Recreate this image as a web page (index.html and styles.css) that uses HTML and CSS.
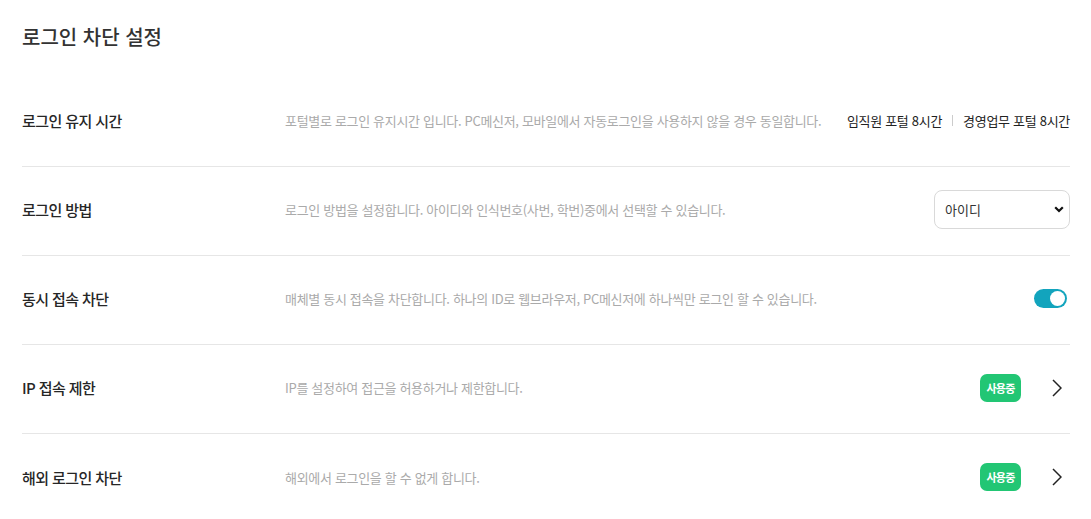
FILE: index.html
```html
<!doctype html>
<html lang="ko">
<head>
    <meta charset="UTF-8">
    <title>로그인 차단 설정</title>
    <link rel="stylesheet" href="styles.css">
</head>
<body>
    <div class="page">
        <h1 class="title">로그인 차단 설정</h1>

        <ul class="setting-list">
            <li class="setting-row">
                <div class="label">로그인 유지 시간</div>
                <div class="desc">포털별로 로그인 유지시간 입니다. PC메신저, 모바일에서 자동로그인을 사용하지 않을 경우 동일합니다.</div>
                <div class="action keep-time">
                    <span>임직원 포털 8시간</span>
                    <span class="sep"></span>
                    <span>경영업무 포털 8시간</span>
                </div>
            </li>
            <li class="setting-row">
                <div class="label">로그인 방법</div>
                <div class="desc">로그인 방법을 설정합니다. 아이디와 인식번호(사번, 학번)중에서 선택할 수 있습니다.</div>
                <div class="action">
                    <div class="select-box">
                        <span>아이디</span>
                        <svg width="10" height="7" viewBox="0 0 10 7"><path d="M1.2 1.2 L5 5 L8.8 1.2" fill="none" stroke="#111" stroke-width="2.2"/></svg>
                    </div>
                </div>
            </li>
            <li class="setting-row">
                <div class="label">동시 접속 차단</div>
                <div class="desc">매체별 동시 접속을 차단합니다. 하나의 ID로 웹브라우저, PC메신저에 하나씩만 로그인 할 수 있습니다.</div>
                <div class="action">
                    <span class="toggle on"><span class="knob"></span></span>
                </div>
            </li>
            <li class="setting-row">
                <div class="label">IP 접속 제한</div>
                <div class="desc">IP를 설정하여 접근을 허용하거나 제한합니다.</div>
                <div class="action">
                    <span class="badge">사용중</span>
                    <svg class="arrow" width="10" height="18" viewBox="0 0 10 18"><path d="M1 1 L9 9 L1 17" fill="none" stroke="#222" stroke-width="1.5"/></svg>
                </div>
            </li>
            <li class="setting-row">
                <div class="label">해외 로그인 차단</div>
                <div class="desc">해외에서 로그인을 할 수 없게 합니다.</div>
                <div class="action">
                    <span class="badge">사용중</span>
                    <svg class="arrow" width="10" height="18" viewBox="0 0 10 18"><path d="M1 1 L9 9 L1 17" fill="none" stroke="#222" stroke-width="1.5"/></svg>
                </div>
            </li>
        </ul>
    </div>
</body>
</html>
```

FILE: styles.css
```css
*{padding: 0; margin: 0; box-sizing: border-box;}
body{background: #fff; color: #222; font-family: "Noto Sans CJK KR", "Noto Sans", sans-serif;}
ul{list-style: none;}

.page{padding: 0 21px 0 22px;}
.title{font-size: 20px; font-weight: 500; line-height: 28px; padding-top: 23px; height: 78px; color: #333;}

.setting-row{display: flex; align-items: center; height: 89px; padding-bottom: 3px; border-bottom: 1px solid #e6e6e6;}
.setting-row:last-child{border-bottom: none;}
.label{width: 263px; flex: none; font-size: 15px; font-weight: 500; color: #262626; letter-spacing: -0.6px;}
.desc{flex: 1; font-size: 13px; color: #aaa; white-space: nowrap; letter-spacing: -0.32px;}
.action{display: flex; align-items: center; flex: none;}

.keep-time{font-size: 13px; color: #222; gap: 10px; letter-spacing: -0.3px;}
.keep-time .sep{width: 1px; height: 11px; background: #ccc;}

.select-box{width: 136px; height: 39px; border: 1px solid #d9d9d9; border-radius: 8px; display: flex; align-items: center; justify-content: space-between; padding: 0 5px 0 10px; font-size: 13px; color: #333;}

.toggle{display: block; width: 33px; height: 19px; border-radius: 10px; background: #ccc; position: relative; margin-right: 3px;}
.toggle.on{background: #12a4bd;}
.toggle .knob{position: absolute; top: 2px; left: 2px; width: 15px; height: 15px; border-radius: 50%; background: #fff;}
.toggle.on .knob{left: 16px;}

.badge{display: block; width: 41px; height: 28px; line-height: 28px; text-align: center; border-radius: 7px; background: #22c674; color: #fff; font-size: 11px; font-weight: 700; letter-spacing: -0.8px;}
.arrow{margin-left: 31px; margin-right: 8px;}
```
